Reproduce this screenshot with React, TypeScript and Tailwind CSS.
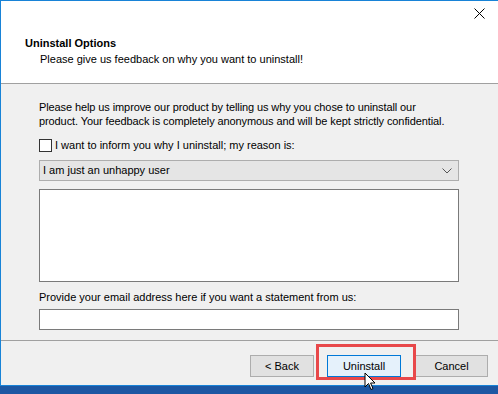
import React from "react";

const font = { fontFamily: '"Liberation Sans", Arial, sans-serif' };

function Cursor() {
  return (
    <svg width="13" height="20" viewBox="0 0 13 20" className="absolute left-[364px] top-[372px]">
      <path
        d="M1 1 L1 15 L4.5 11.5 L7 17.5 L9 16.6 L6.6 11 L11 11 Z"
        fill="#ffffff"
        stroke="#000000"
        strokeWidth="1"
        strokeLinejoin="round"
      />
    </svg>
  );
}

export default function App() {
  return (
    <div
      className="relative w-[498px] h-[394px] overflow-hidden bg-[#1d57a3] text-[11px] text-black"
      style={font}
    >
      {/* Window */}
      <div className="w-[520px] h-[386px] border-l border-t border-b border-[#1883d7] bg-[#f0f0f0] flex flex-col">
        {/* Header */}
        <div className="h-[83px] bg-white border-b border-[#a0a0a0] relative shrink-0">
          <svg width="11" height="11" viewBox="0 0 11 11" className="absolute left-[473px] top-[7px]">
            <path d="M0.5 0.5 L10.5 10.5 M10.5 0.5 L0.5 10.5" stroke="#000" strokeWidth="1" />
          </svg>
          <div className="pl-[24px] pt-[36px] font-bold leading-[13px]">Uninstall Options</div>
          <div className="pl-[39px] pt-[3px] leading-[13px]">
            Please give us feedback on why you want to uninstall!
          </div>
        </div>

        {/* Body */}
        <div className="pl-[38px] pr-[2px] pt-[16px] w-[460px] box-content">
          <p className="leading-[14px] tracking-[-0.1px]">
            Please help us improve our product by telling us why you chose to uninstall our
            <br />
            product. Your feedback is completely anonymous and will be kept strictly confidential.
          </p>
          <label className="flex items-center gap-[3px] mt-[11px] h-[13px]">
            <span className="w-[13px] h-[13px] border border-[#333333] bg-white shrink-0" />
            <span className="leading-[13px]">I want to inform you why I uninstall; my reason is:</span>
          </label>
          <div className="mt-[8px] w-[420px] h-[21px] border border-[#adadad] bg-[#e5e5e5] flex items-center justify-between pl-[3px] pr-[6px]">
            <span>I am just an unhappy user</span>
            <svg width="10" height="6" viewBox="0 0 10 6">
              <path d="M0.5 0.5 L5 5 L9.5 0.5" stroke="#555" fill="none" strokeWidth="1" />
            </svg>
          </div>
          <div className="mt-[8px] w-[420px] h-[93px] border border-[#7a7a7a] bg-white" />
          <div className="mt-[9px] leading-[13px]">
            Provide your email address here if you want a statement from us:
          </div>
          <div className="mt-[5px] w-[420px] h-[21px] border border-[#7a7a7a] bg-white" />
        </div>

        {/* Footer */}
        <div className="mt-[10px] border-t border-[#a0a0a0] w-full" />
        <div className="flex items-center pl-[249px] pt-[14px] gap-[13px]">
          <button className="w-[64px] h-[22px] border border-[#adadad] bg-[#e1e1e1] leading-none">
            &lt; Back
          </button>
          <button className="w-[74px] h-[22px] border border-[#0078d7] bg-[#e5f1fb] leading-none">
            Uninstall
          </button>
          <button className="w-[73px] h-[22px] border border-[#adadad] bg-[#e1e1e1] leading-none ml-[1px]">
            Cancel
          </button>
        </div>
      </div>

      {/* Highlight */}
      <div className="absolute left-[316px] top-[344px] w-[100px] h-[36px] border-[3px] border-[#e8484a]" />
      <Cursor />
    </div>
  );
}
